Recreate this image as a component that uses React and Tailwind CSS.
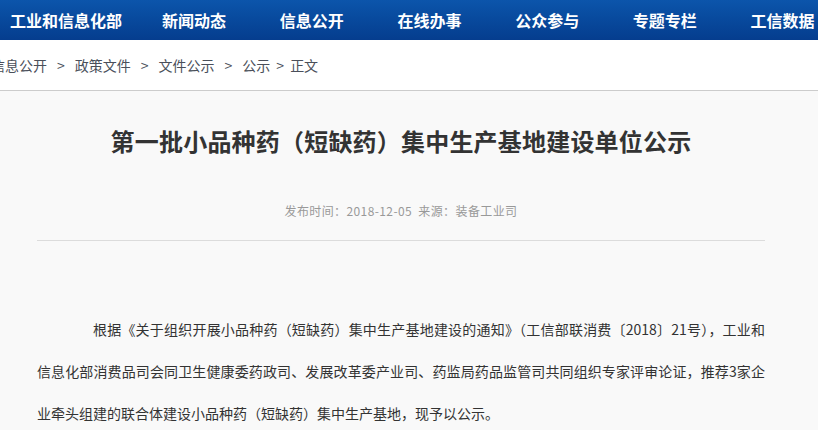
import React from 'react';

const nav = ['新闻动态', '信息公开', '在线办事', '公众参与', '专题专栏', '工信数据'];

const crumbs = ['信息公开', '政策文件', '文件公示', '公示'];

export default function App() {
  const cjk = { fontFamily: '"Noto Sans CJK SC", "Noto Sans", sans-serif' };

  return (
    <div className="w-[818px] h-[430px] overflow-hidden bg-[#f9f9f9]" style={cjk}>
      {/* top nav */}
      <div className="h-[40px] flex items-center bg-gradient-to-b from-[#0c55ab] to-[#053d8e] pl-[10px] whitespace-nowrap">
        <span className="text-white text-[16px] font-bold leading-none mr-[40px]">工业和信息化部</span>
        <div className="flex gap-[53.7px]">
          {nav.map((n) => (
            <span key={n} className="text-white text-[16px] font-bold leading-none">{n}</span>
          ))}
        </div>
      </div>

      {/* breadcrumb */}
      <div className="h-[51px] bg-white border-b border-[#cccccc] flex items-center text-[14px] text-[#4a4f5a] whitespace-nowrap">
        <div className="flex items-center ml-[-9px]">
          {crumbs.map((c, i) => (
            <React.Fragment key={c}>
              <span>{c}</span>
              <span className={i === crumbs.length - 1 ? 'mx-[6px]' : 'mx-[10px]'}>&gt;</span>
            </React.Fragment>
          ))}
          <span>正文</span>
        </div>
      </div>

      {/* article */}
      <div className="ml-[37px] w-[728px]">
        <h1 className="pt-[32px] text-center text-[24px] leading-[36px] font-bold text-[#333333] tracking-[0.2px]">
          第一批小品种药（短缺药）集中生产基地建设单位公示
        </h1>
        <div className="mt-[42px] h-[20px] leading-[20px] text-center text-[12px] tracking-[0.4px] text-[#999999]">
          发布时间：2018-12-05&nbsp;&nbsp;来源：装备工业司
        </div>
        <div className="mt-[19px] border-t border-[#dcdcdc]" />

        <div className="mt-[67px] text-[14px] leading-[42px] text-[#333333]">
          <div className="pl-[56px] text-justify [text-align-last:justify]">
            根据《关于组织开展小品种药（短缺药）集中生产基地建设的通知》（工信部联消费〔2018〕21号），工业和
          </div>
          <div className="text-justify [text-align-last:justify]">
            信息化部消费品司会同卫生健康委药政司、发展改革委产业司、药监局药品监管司共同组织专家评审论证，推荐3家企
          </div>
          <div>业牵头组建的联合体建设小品种药（短缺药）集中生产基地，现予以公示。</div>
        </div>
      </div>
    </div>
  );
}
